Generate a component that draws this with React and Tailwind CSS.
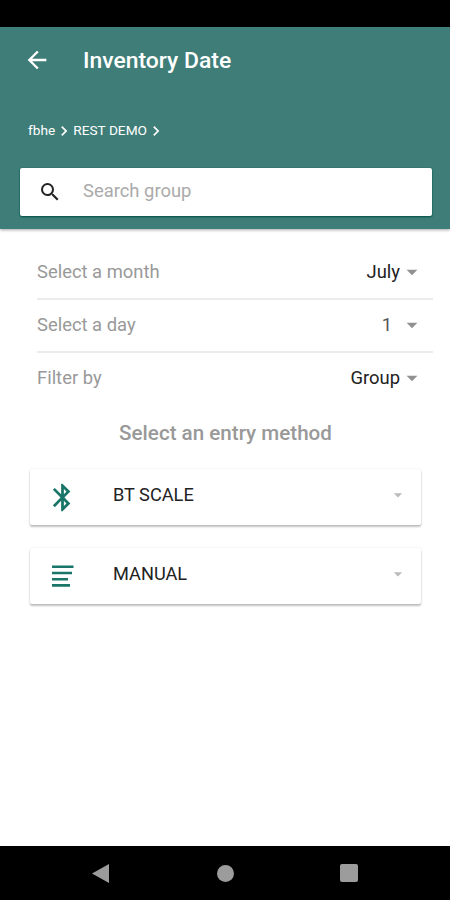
import { MdArrowBack, MdArrowDropDown, MdBluetooth, MdChevronRight, MdSearch } from 'react-icons/md'

const filters = [
  { label: 'Select a month', value: 'July' },
  { label: 'Select a day', value: '1', short: true },
  { label: 'Filter by', value: 'Group' },
]

function ManualIcon() {
  return (
    <svg width="22" height="22" viewBox="0 0 22 22" fill="currentColor">
      <path d="M0 .5h21.5v2.6H0zM0 6.7h20v2.6H0zM0 12.9h16v2.6H0zM0 19.1h18v2.6H0z" />
    </svg>
  )
}

function Header() {
  return (
    <header className="relative h-[202px] shrink-0 bg-[#3f7d78] text-white shadow-[0_1px_3px_rgba(0,0,0,0.35)]">
      <div className="flex h-[66px] items-center pl-[23px]">
        <MdArrowBack size={28} />
        <h1 className="ml-8 pt-[2px] text-[22.9px] font-medium">Inventory Date</h1>
      </div>
      <nav className="mt-6 flex h-[27px] items-center pl-7 text-[13.7px]">
        <span>fbhe</span>
        <MdChevronRight size={20} className="-mr-px -ml-px" />
        <span>REST DEMO</span>
        <MdChevronRight size={20} className="-ml-px" />
      </nav>
      <div className="mt-6 mr-[18px] ml-5 flex h-[48px] items-center rounded-[2px] bg-white pl-[18px] shadow-[0_1px_2px_#00504b,0_0_1px_#00665c]">
        <MdSearch size={24} className="text-[#222]" />
        <span className="ml-[21px] pb-[2px] text-[18.4px] text-[#aaa]">Search group</span>
      </div>
    </header>
  )
}

function FilterRow({ label, value, short }) {
  return (
    <div className="flex h-full items-center pr-[9px] text-[18.4px]">
      <span className="text-[#999]">{label}</span>
      <span className={short ? 'mr-[8px] ml-auto text-[#555]' : 'ml-auto text-[#222]'}>{value}</span>
      <MdArrowDropDown size={26} className="-mr-px -ml-px text-[#919191]" />
    </div>
  )
}

function MethodCard({ icon, label }) {
  return (
    <div className="flex h-[56px] items-center rounded-[2px] bg-white shadow-[0_2px_2px_rgba(0,0,0,0.24),0_0_2px_rgba(0,0,0,0.12)]">
      <div className="flex w-[65px] justify-center text-[#187568]">{icon}</div>
      <span className="ml-[18px] pb-[5px] text-[18.2px] text-[#222]">{label}</span>
      <MdArrowDropDown size={20} className="mr-[13px] mb-1 ml-auto text-[#bbb]" />
    </div>
  )
}

function NavBar() {
  return (
    <footer className="flex h-[54px] shrink-0 items-center bg-black text-[#9c9c9c]">
      <svg className="ml-[92px]" width="17" height="19" viewBox="0 0 17 19" fill="currentColor">
        <path d="M17 0v19L0 9.5z" />
      </svg>
      <div className="ml-[108px] size-[17px] rounded-full bg-[#9c9c9c]" />
      <div className="ml-[106px] size-[18px] rounded-[2px] bg-[#9c9c9c]" />
    </footer>
  )
}

export default function App() {
  return (
    <div className="flex h-[900px] w-[450px] flex-col overflow-hidden bg-white font-['Roboto',sans-serif]">
      <div className="h-[27px] shrink-0 bg-black" />
      <Header />
      <main className="flex-1">
        <div className="mt-[18px] ml-[37px] grid h-[157px] w-[396px] grid-rows-[52.5px_53px_51.5px] divide-y-2 divide-[#ececec]">
          {filters.map(f => <FilterRow key={f.label} {...f} />)}
        </div>
        <h2 className="mt-[14px] pl-px text-center text-[20.6px] leading-[30px] font-medium text-[#999]">Select an entry method</h2>
        <div className="mt-[21px] mr-[29px] ml-[30px] grid gap-[23px]">
          <MethodCard icon={<MdBluetooth size={33} />} label="BT SCALE" />
          <MethodCard icon={<ManualIcon />} label="MANUAL" />
        </div>
      </main>
      <NavBar />
    </div>
  )
}
